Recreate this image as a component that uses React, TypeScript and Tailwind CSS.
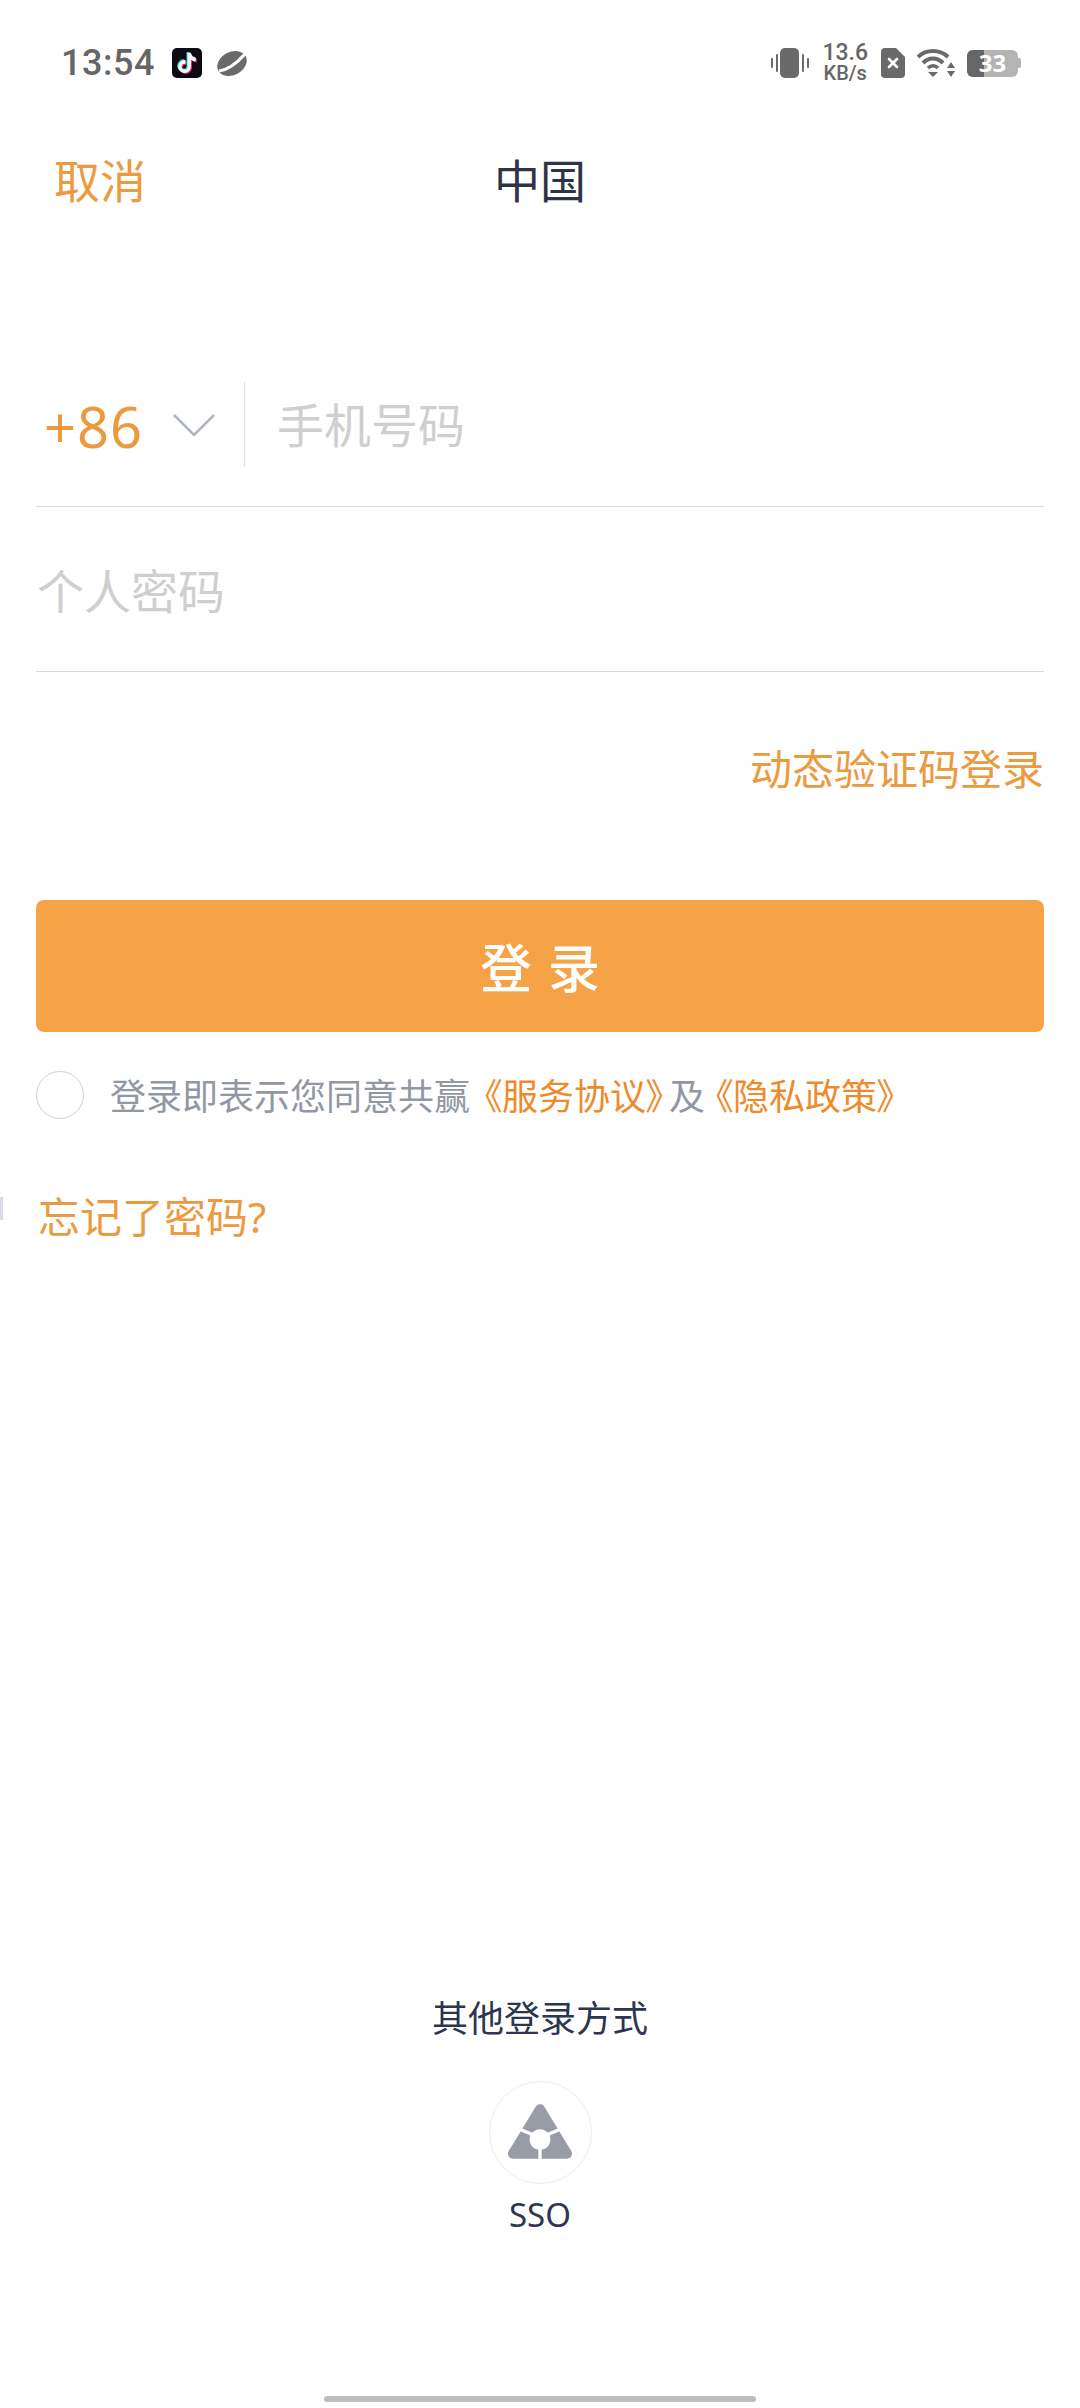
import { FaTiktok } from "react-icons/fa";

const ORANGE = "text-[#ec9a3f]";

function VibrateIcon() {
  return (
    <svg width="38" height="32" viewBox="0 0 38 32" fill="#6a6a6a">
      <rect x="9" y="1" width="19" height="30" rx="5" />
      <rect x="0" y="11" width="2" height="10" rx="1" />
      <rect x="5" y="7" width="2" height="18" rx="1" />
      <rect x="31" y="7" width="2" height="18" rx="1" />
      <rect x="36" y="11" width="2" height="10" rx="1" />
    </svg>
  );
}

function SimIcon() {
  return (
    <svg width="24" height="30" viewBox="0 0 24 30">
      <path d="M4 0H15L24 9V26a4 4 0 0 1-4 4H4a4 4 0 0 1-4-4V4a4 4 0 0 1 4-4Z" fill="#6a6a6a" />
      <path d="M8 11L16 19M16 11L8 19" stroke="#fff" strokeWidth="2.6" strokeLinecap="round" />
    </svg>
  );
}

function WifiIcon() {
  return (
    <svg width="38" height="30" viewBox="0 0 38 30" fill="none">
      <path d="M1 9C9 1 23 1 31 9" stroke="#6a6a6a" strokeWidth="4" />
      <path d="M6 15C12 9 20 9 26 15" stroke="#6a6a6a" strokeWidth="4" />
      <path d="M11 20C14 17 18 17 21 20" stroke="#6a6a6a" strokeWidth="3.5" />
      <path d="M11 24H21L16 29Z" fill="#6a6a6a" />
      <path d="M34 14L38 20H30Z M30 23H38L34 29Z" fill="#6a6a6a" />
    </svg>
  );
}

function BatteryIcon() {
  return (
    <div className="flex items-center">
      <div className="relative flex h-[27px] w-[51px] rounded-[6px] bg-[#b4b4b4]">
        <div className="h-full w-[17px] rounded-l-[6px] bg-[#666666]" />
        <span className="absolute inset-0 flex items-center justify-center text-[24px] leading-none font-bold text-white">
          33
        </span>
      </div>
      <div className="h-[10px] w-[3px] rounded-r-[2px] bg-[#b4b4b4]" />
    </div>
  );
}

function PlanetIcon() {
  return (
    <svg width="30" height="27" viewBox="0 0 30 27">
      <ellipse cx="15" cy="13.5" rx="15.5" ry="11.5" fill="#6a6a6a" transform="rotate(-28 15 13.5)" />
      <path d="M2 21C10 20 20 13 28 4" fill="none" stroke="#fff" strokeWidth="3.2" />
    </svg>
  );
}

function SsoIcon() {
  return (
    <svg width="64" height="55" viewBox="0 0 190 162">
      <path d="M95 15L15 147H175Z" fill="#979ca6" stroke="#979ca6" strokeWidth="30" strokeLinejoin="round" />
      <path d="M95 100V162M95 100L30 72M95 100L160 72" stroke="#fff" strokeWidth="10" />
      <circle cx="95" cy="105" r="31" fill="#fff" />
    </svg>
  );
}

export default function App() {
  return (
    <div className="flex h-[2408px] w-[1080px] flex-col overflow-hidden bg-white font-['Noto_Sans','Noto_Sans_CJK_SC',sans-serif]">
      {/* Status bar */}
      <div className="flex h-[126px] items-center justify-between pr-[59px] pl-[61px] text-[#666666]">
        <div className="flex items-center">
          <span className="font-['Roboto','Noto_Sans',sans-serif] text-[36px] leading-none font-medium tracking-[0.5px]">13:54</span>
          <div className="ml-[17px] flex h-[30px] w-[30px] items-center justify-center rounded-[5px] bg-[#0b0b14]">
            <FaTiktok className="text-[20px] text-white [filter:drop-shadow(1px_1px_0_#e8315a)_drop-shadow(-1px_-1px_0_#25d8e0)]" />
          </div>
          <div className="ml-[15px] flex">
            <PlanetIcon />
          </div>
        </div>
        <div className="flex items-center">
          <VibrateIcon />
          <div className="mr-[13px] ml-[13px] flex flex-col items-center font-['Roboto','Noto_Sans',sans-serif] font-medium">
            <span className="text-[23px] leading-[20px]">13.6</span>
            <span className="text-[20px] leading-[20px]">KB/s</span>
          </div>
          <SimIcon />
          <div className="ml-[12px] flex">
            <WifiIcon />
          </div>
          <div className="ml-[12px] flex">
            <BatteryIcon />
          </div>
        </div>
      </div>

      {/* Header */}
      <div className="relative flex h-[108px] items-center justify-center">
        <span className={`absolute left-[54px] text-[46px] leading-none ${ORANGE}`}>取消</span>
        <span className="text-[46px] leading-none text-[#2f3445]">中国</span>
      </div>

      {/* Form */}
      <div className="flex flex-col px-[36px]">
        <div className="mt-[148px] flex items-center border-b border-[#d9d9d9] pb-[39px]">
          <div className="flex h-[85px] w-[209px] items-center border-r border-[#dedede]">
            <span className={`ml-[8px] pt-[2px] text-[56px] leading-none tracking-[1px] ${ORANGE}`}>+86</span>
            <svg className="ml-[30px]" width="42" height="24" viewBox="0 0 42 24" fill="none">
              <path d="M1 2L21 22L41 2" stroke="#aeb4c0" strokeWidth="2.5" />
            </svg>
          </div>
          <span className="ml-[32px] pt-[2px] text-[47px] leading-none text-[#cfcfcf]">手机号码</span>
        </div>
        <div className="flex h-[165px] items-center border-b border-[#d9d9d9] pt-[4px]">
          <span className="ml-[1px] text-[47px] leading-none text-[#cfcfcf]">个人密码</span>
        </div>
        <div className="flex h-[228px] items-center justify-end pb-[34px]">
          <span className={`text-[42px] leading-none ${ORANGE}`}>动态验证码登录</span>
        </div>

        <button className="flex h-[132px] w-full items-center justify-center rounded-[8px] bg-[#f6a348] pt-[3px] text-[52px] leading-none font-medium tracking-[16px] text-white">
          <span className="pl-[16px]">登录</span>
        </button>

        <div className="mt-[39px] flex items-center">
          <div className="h-[48px] w-[48px] rounded-full border border-[#d2d2d2]" />
          <p className="ml-[26px] pt-[3px] text-[36px] leading-none text-[#9298a3] [font-feature-settings:'palt']">
            登录即表示您同意共赢
            <span className="ml-[14px] text-[#ef8a2b]">《服务协议》</span>
            <span className="ml-[5px]">及</span>
            <span className="ml-[10px] text-[#ef8a2b]">《隐私政策》</span>
          </p>
        </div>

        <div className="relative mt-[77px] flex items-center">
          <div className="absolute top-[1px] left-[-36px] h-[23px] w-[3px] bg-[#d9dce6]" />
          <span className={`ml-[2px] text-[42px] leading-none ${ORANGE}`}>忘记了密码?</span>
        </div>
      </div>

      {/* Other login methods */}
      <div className="mt-auto flex flex-col items-center pb-[6px]">
        <span className="text-[36px] leading-none text-[#2d3550]">其他登录方式</span>
        <div className="mt-[44px] flex h-[103px] w-[103px] items-center justify-center rounded-full border border-[#eeeeee] pb-[2px]">
          <SsoIcon />
        </div>
        <span className="mt-[14px] text-[33px] leading-none text-[#2d3550]">SSO</span>
        <div className="mt-[165px] h-[6px] w-[432px] rounded-full bg-[#bdbdbd]" />
      </div>
    </div>
  );
}
